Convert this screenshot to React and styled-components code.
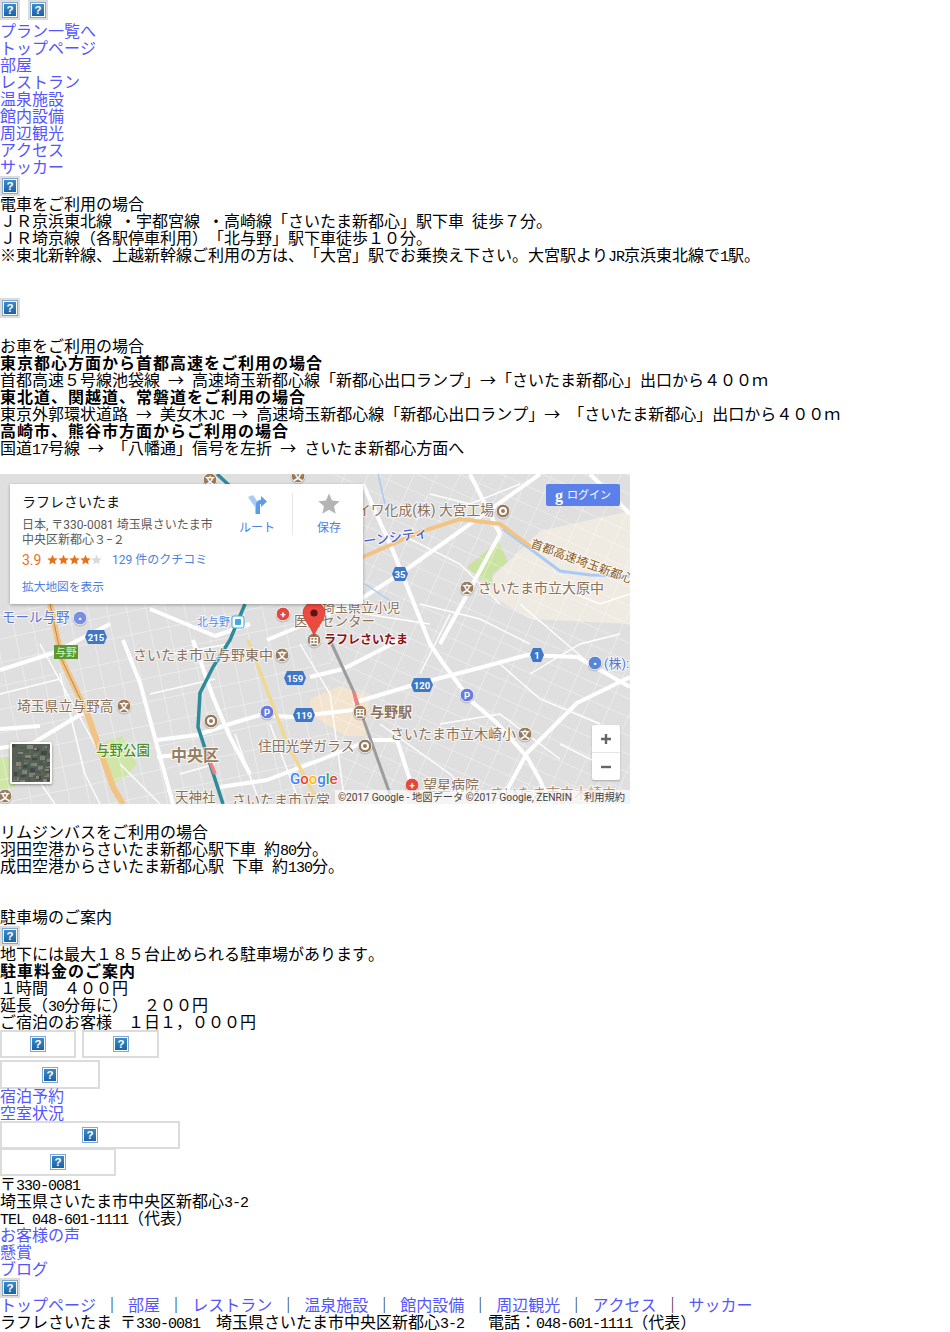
import React from 'react';
import styled, { createGlobalStyle } from 'styled-components';

const Global = createGlobalStyle`
  html, body { margin: 0; padding: 0; background: #fff; }
  body {
    font-family: "Noto Sans CJK JP", sans-serif;
    font-size: 16px;
    line-height: 17px;
    color: #000;
    font-kerning: none;
    text-spacing-trim: space-all;
  }
`

const Page = styled.div`
  width: 950px;
  height: 1332px;
  overflow: hidden;
`
const Link = styled.a`
  display: block;
  color: #5555ff;
  height: 17px;
  white-space: pre;
`
const Row = styled.div`
  height: 17px;
  white-space: pre;
  font-weight: ${p => (p.$bold ? 700 : 400)};
  letter-spacing: ${p => (p.$bold ? '1px' : 'normal')};
`
const Mono = styled.span`
  font-family: "Liberation Mono", monospace;
  font-size: 15px;
  letter-spacing: -1px;
`
const Gap = styled.div`
  height: ${p => p.$h}px;
`
const IconRow = styled.div`
  display: flex;
  gap: 8px;
  height: ${p => p.$h}px;
`
const Broken = styled.div`
  display: flex;
  align-items: center;
  justify-content: center;
  flex: none;
  width: ${p => p.$w || 20}px;
  height: ${p => p.$h || 20}px;
  border: 2px solid #dcdcdc;
  box-sizing: border-box;
`
const ButtonRow = styled.div`
  display: flex;
  gap: 6px;
  height: ${p => p.$h}px;
`
const InlineLink = styled.a`
  color: #5555ff;
`

/* map */
const MapBox = styled.div`
  position: relative;
  width: 630px;
  height: 330px;
  overflow: hidden;
  background: #dfdfdf;
  font-family: Roboto, "Noto Sans CJK JP", sans-serif;
`
const Card = styled.div`
  position: absolute;
  left: 10px;
  top: 10px;
  width: 353px;
  height: 120px;
  box-sizing: border-box;
  padding: 9px 12px;
  display: flex;
  background: #fff;
  box-shadow: 0 1px 3px rgba(0, 0, 0, .3);
`
const CardMain = styled.div`
  width: 196px;
  flex: none;
`
const Title = styled.div`
  font-size: 14px;
  line-height: 18px;
  color: #111;
  margin-bottom: 7px;
`
const Address = styled.div`
  font-size: 12px;
  line-height: 15px;
  color: #5b5b5b;
  white-space: pre;
`
const Rating = styled.div`
  display: flex;
  align-items: center;
  height: 16px;
  margin-top: 4px;
`
const Score = styled.span`
  font-size: 14px;
  color: #e7711b;
  width: 25px;
`
const Reviews = styled.span`
  font-size: 12px;
  color: #4a82e0;
  margin-left: 9px;
  white-space: pre;
`
const Larger = styled.div`
  font-size: 11.7px;
  line-height: 14px;
  color: #4a82e0;
  margin-top: 12px;
`
const Actions = styled.div`
  display: flex;
  margin-left: 4px;
`
const Action = styled.div`
  display: flex;
  flex-direction: column;
  align-items: center;
  width: ${p => p.$w}px;
  height: 42px;
  gap: 6px;
  font-size: 12px;
  line-height: 14px;
  color: #4a82e0;
  white-space: pre;
  border-right: ${p => (p.$divider ? '1px solid #e6e6e6' : 'none')};
`
const Login = styled.div`
  position: absolute;
  left: 546px;
  top: 10px;
  width: 74px;
  height: 22px;
  display: flex;
  align-items: center;
  justify-content: center;
  gap: 4px;
  border-radius: 2px;
  background: #5b80ea;
  color: #fff;
  font-size: 11px;
`
const LoginG = styled.span`
  font-family: "Liberation Serif", serif;
  font-size: 16px;
  font-weight: 700;
  line-height: 15px;
`
const Zoom = styled.div`
  position: absolute;
  left: 592px;
  top: 251px;
  width: 28px;
  height: 55px;
  display: flex;
  flex-direction: column;
  align-items: center;
  background: #fff;
  border-radius: 2px;
  box-shadow: 0 1px 2px rgba(0, 0, 0, .25);
`
const ZoomBtn = styled.div`
  flex: 1;
  width: 100%;
  display: flex;
  align-items: center;
  justify-content: center;
  & + & { border-top: 1px solid #e6e6e6; }
`
const Thumb = styled.div`
  position: absolute;
  left: 10px;
  top: 268px;
  width: 42px;
  height: 42px;
  box-sizing: border-box;
  border: 2px solid #fff;
  border-radius: 2px;
  box-shadow: 0 1px 3px rgba(0, 0, 0, .4);
  overflow: hidden;
`
const Attribution = styled.div`
  position: absolute;
  right: 0;
  bottom: 0;
  width: 295px;
  height: 14px;
  box-sizing: border-box;
  padding: 0 5px 0 3px;
  display: flex;
  justify-content: space-between;
  align-items: center;
  background: rgba(255, 255, 255, .65);
  color: #444;
  font-size: 10.25px;
  white-space: pre;
`

function Q() {
  return (
    <svg width="16" height="16" viewBox="0 0 16 16">
      <defs>
        <linearGradient id="qb" x1="0" y1="0" x2="0" y2="1">
          <stop offset="0" stopColor="#3a8cc8" />
          <stop offset="1" stopColor="#1c62a4" />
        </linearGradient>
      </defs>
      <rect x=".5" y=".5" width="15" height="15" fill="#fff" stroke="#83a8d6" />
      <rect x="2" y="2" width="12" height="12" fill="url(#qb)" />
      <text x="8" y="12.3" fontSize="11.5" fontWeight="700" fill="#fff" textAnchor="middle" fontFamily="Liberation Sans">?</text>
    </svg>
  )
}

// half-width runs sit in a narrow mono so they keep the 8px cell of the page font
function T({ children }) {
  return children.split(/([\x20-\x7e]+)/).map((part, i) =>
    /^[\x20-\x7e]+$/.test(part) ? <Mono key={i}>{part}</Mono> : part
  )
}

function Badge({ x, y, label, w = 22 }) {
  const h = w / 2
  return (
    <g>
      <polygon
        points={`${x - h},${y} ${x - h + 3},${y - 7} ${x + h - 3},${y - 7} ${x + h},${y} ${x + h - 3},${y + 7} ${x - h + 3},${y + 7}`}
        fill="#3f78c6"
      />
      <text x={x} y={y + 3.5} fontSize="9.5" fontWeight="700" fill="#fff" textAnchor="middle">{label}</text>
    </g>
  )
}

function Poi({ x, y, glyph, color = '#97795c' }) {
  return (
    <g>
      <circle cx={x} cy={y + 1} r="7.500" fill="rgba(0,0,0,.16)" />
      <circle cx={x} cy={y} r="6.800" fill={color} stroke="#fff" strokeWidth=".8" />
      {glyph === 'ring'
        ? <circle cx={x} cy={y} r="3" fill="none" stroke="#fff" strokeWidth="2" />
        : <text x={x} y={y + 3.500} fontSize="9.500" fontWeight="700" fill="#fff" textAnchor="middle">{glyph}</text>}
    </g>
  )
}

function Label({ x, y, size = 13, color = '#8b705a', weight = 400, spacing = 0, rotate, children }) {
  return (
    <text
      x={x}
      y={y}
      fontSize={size}
      fontWeight={weight}
      fill={color}
      letterSpacing={spacing}
      stroke="#fff"
      strokeWidth="2"
      strokeOpacity=".75"
      paintOrder="stroke"
      transform={rotate ? `rotate(${rotate} ${x} ${y})` : undefined}
    >
      {children}
    </text>
  )
}

const bigRoads = [
  'M363 10 L393 77 L430 170 L443 189 L470 226 L497 249 L527 283 L540 306 L550 330',
  'M353 229 L413 211 L483 193 L527 181 L577 183 L630 213',
  'M630 203 L577 229 L527 279 L507 316 L497 330',
  'M123 166 L140 209 L173 330',
  'M0 196 L53 179 L110 150',
  'M0 274 L33 269 L83 239 L100 228',
  'M157 266 L197 261 L233 249 L260 241 L293 243 L353 236',
  'M157 283 L197 279',
  'M193 166 L213 223 L230 263 L250 300',
  'M220 313 L267 306 L320 286 L370 266 L397 266 L410 306 L417 313',
  'M0 255 L40 252',
  'M310 203 L343 195 L400 166',
  'M267 166 L353 130 L400 100',
  'M150 135 L215 162 L250 150',
  'M400 100 L540 0',
  'M590 0 L630 40',
  'M470 0 L500 60 L440 170',
]
const thinRoads = [
  'M420 130 L480 145 L530 170', 'M500 190 L540 225 L600 250', 'M440 250 L500 240 L560 285',
  'M380 250 L450 300 L480 330', 'M430 20 L470 30 L520 10', 'M400 60 L460 90 L500 130',
  'M530 200 L580 170 L620 160', 'M560 270 L620 300', 'M300 170 L330 220 L345 330',
  'M270 250 L300 330', 'M170 180 L230 170', 'M150 220 L215 205', 'M60 200 L85 300 L100 330',
  'M0 220 L60 205', 'M20 280 L55 330', 'M40 170 L100 280', 'M120 290 L160 330',
  'M180 300 L215 290', 'M235 260 L260 330', 'M365 140 L430 150', 'M550 110 L600 130 L630 120',
  'M520 130 L590 190', 'M450 140 L420 200',
]

function Streets() {
  return (
    <g>
      <defs>
        <pattern id="grid-a" width="19" height="23" patternUnits="userSpaceOnUse" patternTransform="rotate(-12)">
          <path d="M0 0H19M0 0V23" stroke="#fff" strokeWidth="1" opacity=".7" />
        </pattern>
        <pattern id="grid-b" width="21" height="17" patternUnits="userSpaceOnUse" patternTransform="rotate(24)">
          <path d="M0 0H21M0 0V17" stroke="#fff" strokeWidth="1" opacity=".65" />
        </pattern>
      </defs>
      <rect x="0" y="130" width="330" height="200" fill="url(#grid-a)" />
      <rect x="330" y="0" width="300" height="330" fill="url(#grid-b)" />
      <path d={thinRoads.join(' ')} fill="none" stroke="#fff" strokeWidth="1.4" />
      <path d={bigRoads.join(' ')} fill="none" stroke="#fff" strokeWidth="4" strokeLinejoin="round" />
    </g>
  )
}

function MapDrawing() {
  return (
    <svg width="630" height="330" viewBox="0 0 630 330">
      <polygon points="540,57 630,37 630,150 530,145 480,115" fill="#efebe2" />
      <polygon points="310,225 340,212 370,222 365,262 345,262 310,240" fill="#f3e4cf" />
      <polygon points="467,93 498,67 508,88 492,100 493,112 480,105" fill="#cbe3a0" />
      <polygon points="100,270 122,262 137,290 125,303 112,310" fill="#cfe6a8" />
      <polygon points="0,283 14,283 15,313 0,316" fill="#cfe6a8" />
      <Streets />
      <path d="M503 55 L533 77 L560 97 L590 101 L630 102" fill="none" stroke="#a8cbf6" strokeWidth="3" />
      <path d="M378 0 L385 30 M365 110 L395 130" fill="none" stroke="#a8cbf6" strokeWidth="1.5" />
      {/* expressway */}
      <path d="M363 83 L420 58 L460 45 L500 50 L530 72" fill="none" stroke="#f3c384" strokeWidth="4" strokeLinecap="round" />
      <path d="M50 130 L62 186 L87 239 L113 313 L123 330" fill="none" stroke="#f3c384" strokeWidth="6" />
      <path d="M50 130 L62 186 L87 239" fill="none" stroke="#b98b45" strokeWidth="1" />
      <path d="M248 166 L267 216 L287 269 L317 326" fill="none" stroke="#f0d890" strokeWidth="3.5" />
      {/* railways */}
      <path d="M330 166 L353 216 L390 320" fill="none" stroke="#9c9c9c" strokeWidth="3" />
      <path d="M217 0 L232 14 M245 130 L230 166 L213 193 L200 219 L198 253 L213 299 L223 330" fill="none" stroke="#2f8a9a" strokeWidth="3.5" />
      <path d="M207 280 L215 300" fill="none" stroke="#f08080" strokeWidth="3.5" />
      <path d="M354 218 L358 236" fill="none" stroke="#f08080" strokeWidth="3.5" />

      <Label x={357} y={41} size={13.8}>イワ化成(株) 大宮工場</Label>
      <Poi x={503} y={37} glyph="ring" />
      <Label x={364} y={72} color="#4a5fc4" rotate={-8} weight={500}>ーンシティ</Label>
      <Label x={530} y={73} size={12} color="#8a5a20" rotate={20}>首都高速埼玉新都心</Label>
      <Badge x={400} y={100} label="35" w={16} />
      <Poi x={467} y={114} glyph="文" />
      <Label x={478} y={119} size={14}>さいたま市立大原中</Label>
      <Poi x={210} y={6} glyph="文" />
      <Poi x={298} y={2} glyph="文" />
      <Label x={322} y={138}>埼玉県立小児</Label>
      <Label x={294} y={152} size={13.5}>医療センター</Label>
      <Poi x={283} y={140} glyph="+" color="#e2483d" />
      <Label x={324} y={170} size={12} color="#8c1010" weight={700}>ラフレさいたま</Label>
      <Poi x={314} y={166} glyph="田" />
      <Label x={197} y={152} size={11} color="#5a8ae0">北与野</Label>
      <rect x="232" y="142" width="12" height="12" rx="2" fill="#fff" stroke="#3fa9e0" />
      <rect x="235" y="145" width="6" height="6" rx="1" fill="#3fa9e0" />
      <Label x={2} y={148} size={13.5} color="#5a76cc">モール与野</Label>
      <Poi x={80} y={144} glyph="•" color="#7a8fe0" />
      <Badge x={96} y={163} label="215" />
      <rect x="54" y="171" width="24" height="14" fill="#5a9a30" />
      <text x="66" y="182" fontSize="10.5" fill="#dff0c8" textAnchor="middle">与野</text>
      <Label x={133} y={186} size={14}>さいたま市立与野東中</Label>
      <Poi x={282} y={181} glyph="文" />
      <Badge x={295} y={204} label="159" />
      <Label x={17} y={237} size={13.8}>埼玉県立与野高</Label>
      <Poi x={124} y={232} glyph="文" />
      <Badge x={304} y={241} label="119" />
      <Poi x={267} y={238} glyph="P" color="#6a7be0" />
      <Poi x={211} y={247} glyph="ring" />
      <Badge x={422} y={211} label="120" />
      <Badge x={537} y={181} label="1" w={14} />
      <Label x={370} y={243} size={14} weight={700}>与野駅</Label>
      <Poi x={360} y={238} glyph="田" />
      <Label x={96} y={281} size={13.5} color="#4f9025" weight={500}>与野公園</Label>
      <Label x={171} y={287} size={16} color="#97805f" weight={700}>中央区</Label>
      <Label x={258} y={277} size={13.8}>住田光学ガラス</Label>
      <Poi x={365} y={272} glyph="ring" />
      <Label x={390} y={265} size={14}>さいたま市立木崎小</Label>
      <Poi x={525} y={260} glyph="文" />
      <Poi x={467} y={221} glyph="P" color="#6a7be0" />
      <Poi x={595} y={189} glyph="•" color="#5a86d8" />
      <Label x={604} y={194} color="#5a76cc">(株):</Label>
      <Label x={423} y={316} size={14}>望星病院</Label>
      <Poi x={412} y={311} glyph="+" color="#e2483d" />
      <Label x={175} y={328} size={13.5}>天神社</Label>
      <Label x={232} y={331} size={14}>さいたま市立常</Label>
      <Label x={490} y={324} size={14} color="#a8917c">さいたま市立木崎中</Label>
      <Poi x={5} y={322} glyph="文" />

      <text x="290" y="310" fontSize="15" fontWeight="500" stroke="#fff" strokeWidth="1.5" paintOrder="stroke">
        <tspan fill="#4285f4">G</tspan><tspan fill="#ea4335">o</tspan><tspan fill="#fbbc05">o</tspan><tspan fill="#4285f4">g</tspan><tspan fill="#34a853">l</tspan><tspan fill="#ea4335">e</tspan>
      </text>

      {/* pin */}
      <path d="M314 162 C311 152 303 146 303 139 A11 11 0 1 1 325 139 C325 146 317 152 314 162Z" fill="#ea4a3f" stroke="#c5352c" strokeWidth=".6" />
      <circle cx="314" cy="139" r="3.6" fill="#5c1512" />
    </svg>
  )
}

function Directions() {
  return (
    <svg width="22" height="22" viewBox="0 0 22 22">
      <path d="M2 4 L7 2 L14 12 V21 H9 V14Z" fill="#a9cbf5" />
      <path d="M10 21 V12 C10 9 12 7 15 7 L15 3 L21 8.5 L15 14 V11 C14 11 14 11 14 12 V21Z" fill="#5b9be8" />
    </svg>
  )
}

function BigStar() {
  return (
    <svg width="24" height="22" viewBox="0 0 24 22">
      <path d="M12 .5l3.100 7 7.600.700-5.700 5 1.700 7.500L12 16.800 5.300 20.700 7 13.200l-5.700-5 7.600-.7z" fill="#b4b4b4" />
    </svg>
  )
}

function Stars() {
  return (
    <svg width="56" height="12" viewBox="0 0 56 12">
      {[0, 1, 2, 3, 4].map(i => (
        <path
          key={i}
          transform={`translate(${i * 11} 0)`}
          d="M5.500 .8l1.500 3.400 3.700.3-2.800 2.400.8 3.600-3.200-1.900-3.200 1.900.8-3.600L.300 4.500 4 4.200z"
          fill={i < 4 ? '#e7711b' : '#dadada'}
        />
      ))}
    </svg>
  )
}

function Satellite() {
  const spots = []
  for (let i = 0; i < 90; i++) {
    const x = (i * 17) % 38
    const y = (i * 29) % 38
    const c = ['#5c6a58', '#3f4a44', '#7d8078', '#4d5a4c', '#8a8478'][i % 5]
    spots.push(<rect key={i} x={x} y={y} width={3 + (i % 4)} height={2 + (i % 3)} fill={c} />)
  }
  return (
    <svg width="38" height="38" viewBox="0 0 38 38">
      <rect width="38" height="38" fill="#555f55" />
      {spots}
    </svg>
  )
}

const nav = ['プラン一覧へ', 'トップページ', '部屋', 'レストラン', '温泉施設', '館内設備', '周辺観光', 'アクセス', 'サッカー']
const footerNav = ['トップページ', '部屋', 'レストラン', '温泉施設', '館内設備', '周辺観光', 'アクセス', 'サッカー']

export default function App() {
  return (
    <Page>
      <Global />
      <IconRow $h={22}><Broken><Q /></Broken><Broken><Q /></Broken></IconRow>
      {nav.map(t => <Link key={t}>{t}</Link>)}
      <Gap $h={1} />
      <IconRow $h={19}><Broken><Q /></Broken></IconRow>

      <Row>電車をご利用の場合</Row>
      <Row><T>ＪＲ京浜東北線 ・宇都宮線 ・高崎線「さいたま新都心」駅下車 徒歩７分。</T></Row>
      <Row>ＪＲ埼京線（各駅停車利用）「北与野」駅下車徒歩１０分。</Row>
      <Row><T>※東北新幹線、上越新幹線ご利用の方は、「大宮」駅でお乗換え下さい。大宮駅よりJR京浜東北線で1駅。</T></Row>
      <Gap $h={35} />
      <IconRow $h={39}><Broken><Q /></Broken></IconRow>

      <Row>お車をご利用の場合</Row>
      <Row $bold>東京都心方面から首都高速をご利用の場合</Row>
      <Row><T>首都高速５号線池袋線 → 高速埼玉新都心線「新都心出口ランプ」→「さいたま新都心」出口から４００ｍ</T></Row>
      <Row $bold>東北道、関越道、常磐道をご利用の場合</Row>
      <Row><T>東京外郭環状道路 → 美女木JC → 高速埼玉新都心線「新都心出口ランプ」→ 「さいたま新都心」出口から４００ｍ</T></Row>
      <Row $bold>高崎市、熊谷市方面からご利用の場合</Row>
      <Row><T>国道17号線 → 「八幡通」信号を左折 → さいたま新都心方面へ</T></Row>
      <Gap $h={18} />

      <MapBox>
        <MapDrawing />
        <Card>
          <CardMain>
            <Title>ラフレさいたま</Title>
            <Address>日本, 〒330-0081 埼玉県さいたま市{'\n'}中央区新都心３−２</Address>
            <Rating>
              <Score>3.9</Score>
              <Stars />
              <Reviews>129 件のクチコミ</Reviews>
            </Rating>
            <Larger>拡大地図を表示</Larger>
          </CardMain>
          <Actions>
            <Action $w={70} $divider><Directions />ルート</Action>
            <Action $w={72}><BigStar />保存</Action>
          </Actions>
        </Card>
        <Login><LoginG>g</LoginG>ログイン</Login>
        <Zoom>
          <ZoomBtn>
            <svg width="12" height="12" viewBox="0 0 12 12"><path d="M6 1v10M1 6h10" stroke="#666" strokeWidth="2.4" /></svg>
          </ZoomBtn>
          <ZoomBtn>
            <svg width="12" height="12" viewBox="0 0 12 12"><path d="M1 6h10" stroke="#666" strokeWidth="2.4" /></svg>
          </ZoomBtn>
        </Zoom>
        <Thumb><Satellite /></Thumb>
        <Attribution><span>©2017 Google - 地図データ ©2017 Google, ZENRIN</span><span>利用規約</span></Attribution>
      </MapBox>

      <Gap $h={19} />
      <Row>リムジンバスをご利用の場合</Row>
      <Row><T>羽田空港からさいたま新都心駅下車 約80分。</T></Row>
      <Row><T>成田空港からさいたま新都心駅 下車 約130分。</T></Row>
      <Gap $h={34} />
      <Row>駐車場のご案内</Row>
      <Gap $h={1} />
      <IconRow $h={19}><Broken><Q /></Broken></IconRow>
      <Row>地下には最大１８５台止められる駐車場があります。</Row>
      <Row $bold>駐車料金のご案内</Row>
      <Row>１時間　４００円</Row>
      <Row><T>延長（30分毎に）　２００円</T></Row>
      <Row>ご宿泊のお客様　１日１，０００円</Row>

      <ButtonRow $h={30}><Broken $w={76} $h={28}><Q /></Broken><Broken $w={77} $h={28}><Q /></Broken></ButtonRow>
      <ButtonRow $h={27}><Broken $w={100} $h={29}><Q /></Broken></ButtonRow>
      <Link>宿泊予約</Link>
      <Link>空室状況</Link>
      <ButtonRow $h={27}><Broken $w={180} $h={28}><Q /></Broken></ButtonRow>
      <ButtonRow $h={27}><Broken $w={116} $h={28}><Q /></Broken></ButtonRow>

      <Row><T>〒330-0081</T></Row>
      <Row><T>埼玉県さいたま市中央区新都心3-2</T></Row>
      <Row><T>TEL 048-601-1111（代表）</T></Row>
      <Link>お客様の声</Link>
      <Link>懸賞</Link>
      <Link>ブログ</Link>
      <Gap $h={1} />
      <IconRow $h={18}><Broken><Q /></Broken></IconRow>
      <Row>
        {footerNav.map((t, i) => (
          <React.Fragment key={t}>
            {i > 0 && <T> ｜ </T>}
            <InlineLink>{t}</InlineLink>
          </React.Fragment>
        ))}
      </Row>
      <Row><T>ラフレさいたま 〒330-0081  埼玉県さいたま市中央区新都心3-2   電話：048-601-1111（代表）</T></Row>
    </Page>
  )
}
